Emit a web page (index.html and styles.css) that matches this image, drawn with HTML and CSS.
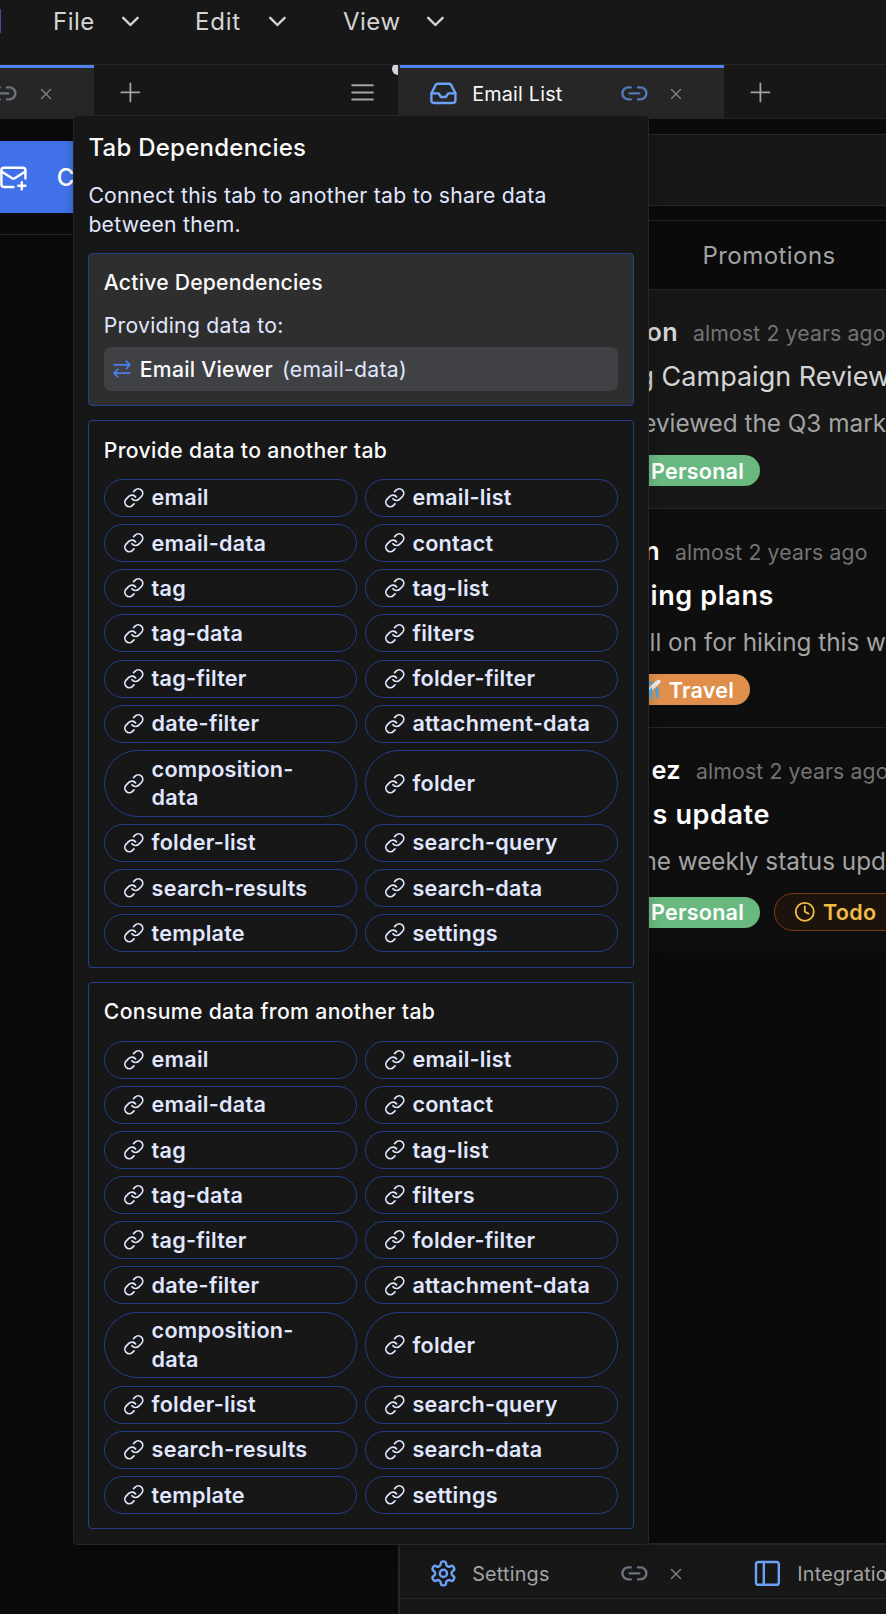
FILE: index.html
```html
<!DOCTYPE html>
<html lang="en">
<head>
<meta charset="utf-8">
<title>Email List</title>
<link rel="stylesheet" href="styles.css">
</head>
<body>
<svg class="sprite" aria-hidden="true">
  <symbol id="chevron" viewBox="0 0 24 24"><path d="m6 9 6 6 6-6"/></symbol>
  <symbol id="plus" viewBox="0 0 24 24"><path d="M4.5 12h15M12 4.5v15"/></symbol>
  <symbol id="menu" viewBox="0 0 24 24"><path d="M3.4 6h17.2M3.4 12h17.2M3.4 18h17.2"/></symbol>
  <symbol id="close" viewBox="0 0 24 24"><path d="M18 6 6 18M6 6l12 12"/></symbol>
  <symbol id="link2" viewBox="0 0 24 24"><path d="M9 17H7A5 5 0 0 1 7 7h2M15 7h2a5 5 0 1 1 0 10h-2M8 12h8"/></symbol>
  <symbol id="link" viewBox="0 0 24 24"><path d="M10 13a5 5 0 0 0 7.54.54l3-3a5 5 0 0 0-7.07-7.07l-1.72 1.71"/><path d="M14 11a5 5 0 0 0-7.54-.54l-3 3a5 5 0 0 0 7.07 7.07l1.71-1.71"/></symbol>
  <symbol id="inbox" viewBox="0 0 24 24"><path d="M22 12h-6l-2 3h-4l-2-3H2"/><path d="M5.45 5.11 2 12v6a2 2 0 0 0 2 2h16a2 2 0 0 0 2-2v-6l-3.45-6.89A2 2 0 0 0 16.76 4H7.24a2 2 0 0 0-1.79 1.11z"/></symbol>
  <symbol id="mailplus" viewBox="0 0 24 24"><path d="M22 13V6a2 2 0 0 0-2-2H4a2 2 0 0 0-2 2v12c0 1.1.9 2 2 2h8"/><path d="m22 7-8.97 5.7a1.94 1.94 0 0 1-2.06 0L2 7M19 16v6M16 19h6"/></symbol>
  <symbol id="swap" viewBox="0 0 24 24"><path d="m17 2.500 4.500 4.500-4.500 4.500M21 7H2.500M7 21.500 2.500 17 7 12.500M3 17h18.500"/></symbol>
  <symbol id="clock" viewBox="0 0 24 24"><circle cx="12" cy="12" r="10"/><path d="M12 6v6l4 2"/></symbol>
  <symbol id="panel" viewBox="0 0 24 24"><rect x="2.500" y="2.500" width="19" height="19" rx="2"/><path d="M9 2.500v19"/></symbol>
  <symbol id="gear" viewBox="0 0 24 24"><path d="M12.22 2h-.44a2 2 0 0 0-2 2v.18a2 2 0 0 1-1 1.73l-.43.25a2 2 0 0 1-2 0l-.15-.08a2 2 0 0 0-2.73.73l-.22.38a2 2 0 0 0 .73 2.73l.15.1a2 2 0 0 1 1 1.72v.51a2 2 0 0 1-1 1.74l-.15.09a2 2 0 0 0-.73 2.73l.22.38a2 2 0 0 0 2.730.73l.15-.08a2 2 0 0 1 2 0l.43.25a2 2 0 0 1 1 1.730V20a2 2 0 0 0 2 2h.44a2 2 0 0 0 2-2v-.18a2 2 0 0 1 1-1.730l.43-.25a2 2 0 0 1 2 0l.15.08a2 2 0 0 0 2.730-.73l.22-.39a2 2 0 0 0-.73-2.730l-.15-.08a2 2 0 0 1-1-1.740v-.5a2 2 0 0 1 1-1.740l.15-.09a2 2 0 0 0 .73-2.730l-.22-.38a2 2 0 0 0-2.730-.73l-.15.08a2 2 0 0 1-2 0l-.43-.25a2 2 0 0 1-1-1.730V4a2 2 0 0 0-2-2z"/><circle cx="12" cy="12" r="3"/></symbol>
  <symbol id="plane" viewBox="0 0 24 24"><path d="M12 7 3 5l1.500-2L16 4zM17 12l2 9 2-1.500L20 8z" fill="#4aa3df"/><path d="m2 17 4 1 1 4-2-1z" fill="#3d91cf"/><path d="M3 21C7 14 12 8 17 4c2-2 4-2.500 5-2s.5 3-2 5C15 12 10 16 3 21z" fill="#e9edf0"/><path d="m10 13 4-4 1 14-2-2z" fill="#55b0ea"/></symbol>
</svg>

<div class="app">
  <header class="menubar">
    <span class="logo-edge"></span>
    <div class="menu menu-file">File<svg class="ic"><use href="#chevron"/></svg></div>
    <div class="menu menu-edit">Edit<svg class="ic"><use href="#chevron"/></svg></div>
    <div class="menu menu-view">View<svg class="ic"><use href="#chevron"/></svg></div>
  </header>

  <div class="workspace">
    <aside class="left">
      <div class="tabstrip">
        <div class="tab tab-left active">
          <svg class="ic muted"><use href="#link2"/></svg>
          <svg class="x"><use href="#close"/></svg>
        </div>
        <svg class="ic add"><use href="#plus"/></svg>
        <svg class="ic burger"><use href="#menu"/></svg>
        <span class="dot"></span>
      </div>
      <div class="compose-area">
        <button class="compose"><svg class="ic"><use href="#mailplus"/></svg>Compose</button>
      </div>
    </aside>

    <main class="right">
      <div class="tabstrip">
        <div class="tab tab-list active">
          <svg class="ic blue"><use href="#inbox"/></svg>
          <span class="tab-name">Email List</span>
          <svg class="ic linked"><use href="#link2"/></svg>
          <svg class="x"><use href="#close"/></svg>
        </div>
        <svg class="ic add"><use href="#plus"/></svg>
      </div>
      <div class="toolbar"></div>
      <div class="categories"><span>Promotions</span></div>

      <article class="mail read">
        <div class="line who"><b class="name n1">on</b><time>almost 2 years ago</time></div>
        <div class="line subject s1">g Campaign Review</div>
        <div class="line snippet p1">eviewed the Q3 mark</div>
        <div class="tags"><div class="tagbox t1"><span class="tag green">Personal</span></div></div>
      </article>
      <article class="mail">
        <div class="line who"><b class="name n2">n</b><time>almost 2 years ago</time></div>
        <div class="line subject s2">ing plans</div>
        <div class="line snippet p2">ll on for hiking this w</div>
        <div class="tags"><div class="tagbox t2"><span class="tag orange"><svg class="plane"><use href="#plane"/></svg>Travel</span></div></div>
      </article>
      <article class="mail last">
        <div class="line who"><b class="name n3">ez</b><time>almost 2 years ago</time></div>
        <div class="line subject s3">s update</div>
        <div class="line snippet p3">he weekly status upd</div>
        <div class="tags"><div class="tagbox t1"><span class="tag green">Personal</span></div><span class="todo"><svg><use href="#clock"/></svg>Todo</span></div>
      </article>

      <section class="dock">
        <div class="tabstrip">
          <div class="tab tab-settings">
            <svg class="ic blue"><use href="#gear"/></svg>
            <span class="tab-name">Settings</span>
            <svg class="ic muted"><use href="#link2"/></svg>
            <svg class="x"><use href="#close"/></svg>
          </div>
          <div class="tab tab-int">
            <svg class="ic blue"><use href="#panel"/></svg>
            <span class="tab-name">Integrations</span>
          </div>
        </div>
      </section>
    </main>
  </div>
</div>

<div class="popover">
  <h2>Tab Dependencies</h2>
  <p class="intro">Connect this tab to another tab to share data between them.</p>
  <section class="card filled">
    <h3>Active Dependencies</h3>
    <p class="label">Providing data to:</p>
    <div class="dep"><svg><use href="#swap"/></svg><b>Email Viewer</b><span>(email-data)</span></div>
  </section>
  <section class="card">
    <h3>Provide data to another tab</h3>
    <div class="pills"></div>
  </section>
  <section class="card">
    <h3>Consume data from another tab</h3>
    <div class="pills"></div>
  </section>
</div>
<script src="pills.js"></script>
</body>
</html>
```

FILE: styles.css
```css
* { box-sizing: border-box; }
body {
  margin: 0;
  width: 886px;
  height: 1614px;
  overflow: hidden;
  position: relative;
  background: #0a0a0a;
  font-family: Inter, "Liberation Sans", sans-serif;
  color: #d4d4d4;
}
h2, h3, p { margin: 0; }
svg { fill: none; stroke: currentColor; stroke-width: 2; stroke-linecap: round; stroke-linejoin: round; flex: none; }
.sprite { display: none; }
.ic { width: 28.8px; height: 28.8px; }
.app { height: 1614px; display: flex; flex-direction: column; }

.menubar {
  height: 65px;
  flex: none;
  display: flex;
  background: #171717;
  border-bottom: 1px solid #262626;
}
.logo-edge { width: 1px; height: 24px; margin-top: 9px; background: #5b3fa0; }
.menu {
  height: 43px;
  display: flex;
  align-items: center;
  justify-content: space-between;
  font-size: 24px;
  letter-spacing: 0.5px;
}
.menu-file { margin-left: 52px; width: 92px; }
.menu-edit { margin-left: 50px; width: 97px; letter-spacing: 0.8px; }
.menu-view { margin-left: 51px; width: 107px; }

.workspace { flex: 1; display: flex; min-height: 0; }
.left { width: 398px; flex: none; }
.right { width: 488px; flex: none; border-left: 2px solid #262626; display: flex; flex-direction: column; }

.tabstrip {
  height: 54px;
  flex: none;
  display: flex;
  align-items: flex-start;
  background: #171717;
  border-bottom: 1px solid #262626;
  overflow: hidden;
  color: #a3a3a3;
}
.tab { height: 54px; flex: none; display: flex; align-items: center; padding-top: 3px; }
.tab.active { background: #262626; border-top: 3px solid #5083ec; padding-top: 0; color: #fafafa; }
.tab-name { font-size: 19.8px; letter-spacing: 0.2px; line-height: 28px; padding-top: 1px; }
.tab .x { width: 18px; height: 18px; color: #858585; stroke-width: 1.7; }
.blue { color: #6ba1f7; }
.linked { color: #5478b8; }
.muted { color: #6b7280; }
.tab-left { width: 94px; }
.tab-left .ic { margin-left: -11.2px; }
.tab-left .x { margin-left: 19px; }
.add { stroke-width: 1.5; margin: 13px 0 0 21.500px; }
.burger { margin: 13px 0 0 203.500px; stroke-width: 1.7; width: 29px; }
.dot { width: 12px; height: 12px; flex: none; margin: -2px 0 0 15px; border-radius: 50%; background: #d1d5db; }

.tab-list { width: 324px; padding-left: 29px; }
.tab-list .tab-name, .tab-settings .tab-name { margin-left: 14.400px; width: 148px; }
.tab-list .x, .tab-settings .x { margin-left: 18px; }

.compose-area { height: 116px; padding-top: 22px; border-bottom: 1px solid #262626; }
.compose {
  width: 200px;
  height: 72px;
  border: 0;
  padding: 0;
  display: flex;
  align-items: center;
  gap: 29px;
  background: #4071e8;
  color: #fff;
  font: 500 24px Inter, sans-serif;
}
.compose .ic { margin-left: -1px; }

.toolbar { height: 72px; flex: none; margin: 15px 0 14px; background: #171717; border: solid #262626; border-width: 1px 0; }
.categories {
  height: 70px;
  flex: none;
  display: flex;
  align-items: center;
  padding-left: 302.500px;
  border: solid #262626;
  border-width: 1px 0;
  font-size: 24px;
  letter-spacing: 0.45px;
  color: #a3a3a3;
}

.mail { height: 219px; flex: none; padding-top: 24px; background: #0e0e0e; border-bottom: 1px solid #262626; overflow: hidden; }
.mail.read { background: #171717; }
.mail.last { height: 225px; border-bottom: 0; }
.line { white-space: nowrap; text-align: right; }
.who { display: flex; height: 40px; line-height: 37px; align-items: baseline; gap: 15px; }
.name { flex: none; font-weight: 600; font-size: 25.200px; color: #fff; letter-spacing: 0.4px; }
.n1 { width: 278px; }
.n2 { width: 260px; }
.n3 { width: 281px; }
.who time { font-size: 21.200px; letter-spacing: 0.15px; color: #737373; }
.subject { height: 45px; line-height: 45px; font-size: 27px; font-weight: 600; letter-spacing: 0.6px; color: #fff; }
.snippet { height: 48px; line-height: 48px; font-size: 24.300px; color: #a3a3a3; }
.read .name { color: #d4d4d4; }
.read .subject { font-weight: 400; letter-spacing: 0; color: #d4d4d4; }
.s1 { width: 490px; }
.s2 { width: 374px; }
.s3 { width: 370px; }
.p1, .p2, .p3 { width: 486px; }
.tags { display: flex; align-items: center; padding-top: 8px; gap: 14px; }
.tagbox { display: flex; flex: none; justify-content: flex-end; }
.t1 { width: 360px; }
.t2 { width: 350px; }
.tag {
  width: 140px;
  height: 31px;
  border-radius: 16px;
  padding-right: 16px;
  display: flex;
  align-items: center;
  justify-content: flex-end;
  font-size: 21.600px;
  font-weight: 600;
  letter-spacing: 0.2px;
  color: #fff;
}
.green { background: #69b87f; }
.orange { background: #e08e4b; }
.plane { width: 24px; height: 24px; stroke: none; margin-right: 7px; }
.todo {
  width: 130px;
  height: 38px;
  flex: none;
  display: flex;
  align-items: center;
  gap: 8px;
  padding-left: 18.500px;
  border: 1px solid #7c3a18;
  border-radius: 19px;
  background: #1c130d;
  color: #f2bd42;
  font-size: 21.600px;
  font-weight: 600;
  letter-spacing: 0.2px;
}
.todo svg { width: 21.600px; height: 21.600px; }

.dock { margin-top: auto; height: 71px; flex: none; background: #171717; border-top: 2px solid #262626; }
.tab-settings { width: 324px; padding-left: 29px; }
.tab-int { padding-left: 29px; }
.tab-int .tab-name { margin-left: 15.500px; }

.popover {
  position: absolute;
  left: 73px;
  top: 115px;
  width: 576px;
  height: 1430px;
  padding: 14.400px;
  border: 1px solid #262626;
  border-radius: 4px;
  background: #171717;
  box-shadow: 0 6px 12px rgba(0, 0, 0, 0.2);
  font-size: 21.200px;
  line-height: 28.800px;
  letter-spacing: 0.25px;
  color: #e0e7ff;
}
.popover h2 { font-size: 24px; font-weight: 500; line-height: 36px; color: #fafafa; }
.intro { margin: 14.400px 0; }
.card { border: 1px solid #223f8c; border-radius: 4px; padding: 14.400px; margin-bottom: 14.400px; }
.filled { background: #2e2e2e; }
.card h3 { font-size: 21.200px; font-weight: 500; color: #fafafa; margin-bottom: 14.400px; letter-spacing: 0.34px; }
.card.filled h3 { letter-spacing: 0.2px; }
.label { margin-bottom: 7.200px; }
.dep { height: 43.200px; display: flex; align-items: center; padding-left: 8px; border-radius: 7px; background: #404144; }
.dep svg { width: 20px; height: 20px; color: #4b7fee; }
.dep b { font-weight: 500; color: #fafafa; margin: 0 9px 0 8px; }
.pills { display: grid; grid-template-columns: 1fr 1fr; gap: 7.200px; }
.pill {
  display: flex;
  align-items: center;
  gap: 7.200px;
  padding: 3.600px 18px;
  border: 1px solid #223f8c;
  border-radius: 34px;
  font-size: 21.600px;
  font-weight: 600;
}
.pill svg { width: 21.600px; height: 21.600px; stroke-width: 1.9; }
```

FILE: pills.js
```javascript
const kinds = [
  "email", "email-list", "email-data", "contact", "tag", "tag-list", "tag-data", "filters",
  "tag-filter", "folder-filter", "date-filter", "attachment-data", "composition-data", "folder",
  "folder-list", "search-query", "search-results", "search-data", "template", "settings"
];
document.querySelectorAll(".pills").forEach(list => {
  list.innerHTML = kinds
    .map(kind => `<div class="pill"><svg><use href="#link"/></svg><span>${kind}</span></div>`)
    .join("");
});
```
